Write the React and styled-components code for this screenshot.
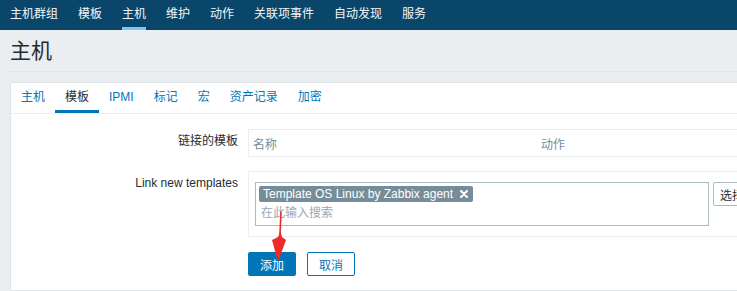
import React from 'react';
import styled, { createGlobalStyle } from 'styled-components';

const GlobalStyle = createGlobalStyle`
  html, body {
    margin: 0;
    padding: 0;
    background: #ebeef0;
    overflow: hidden;
  }
  body {
    font-family: "Liberation Sans", Arial, "Noto Sans CJK SC", sans-serif;
    font-size: 12px;
    color: #1f2c33;
  }
`;

const Page = styled.div`
  position: relative;
  width: 1000px;
`;

const TopNav = styled.nav`
  display: flex;
  gap: 20px;
  height: 30px;
  padding-left: 10px;
  background: #0a466a;
`;

const NavItem = styled.a`
  display: block;
  height: 27px;
  line-height: 28px;
  color: #f4f6f8;
  text-decoration: none;
  border-bottom: 3px solid ${(p) => (p.$active ? '#7fc6f2' : 'transparent')};
`;

const Header = styled.header`
  margin: 0 10px;
  padding: 9px 0 8px;
  border-bottom: 1px solid #dfe4e7;
`;

const Title = styled.h1`
  margin: 0;
  font-size: 21px;
  line-height: 24px;
  font-weight: normal;
  color: #1f2c33;
`;

const Card = styled.section`
  margin: 10px 0 0 10px;
  background: #fff;
  border: 1px solid #dfe4e7;
`;

const Tabs = styled.div`
  display: flex;
  height: 30px;
  border-bottom: 1px solid #ebeef0;
`;

const Tab = styled.a`
  display: block;
  padding: 0 10px;
  height: 27px;
  line-height: 28px;
  text-decoration: none;
  color: ${(p) => (p.$active ? '#1f2c33' : '#0275b8')};
  border-bottom: 3px solid ${(p) => (p.$active ? '#0275b8' : 'transparent')};
`;

const Form = styled.div`
  display: grid;
  grid-template-columns: 227px 1fr;
  column-gap: 10px;
  row-gap: 14px;
  padding: 15px 0 14px;
`;

const Label = styled.div`
  text-align: right;
  padding-top: 5px;
  line-height: 14px;
  color: #1f2c33;
`;

const Table = styled.div`
  display: grid;
  grid-template-columns: 288px 1fr;
  height: 26px;
  align-items: center;
  border: 1px solid #ebeef0;
`;

const HeadCell = styled.div`
  padding-left: 4px;
  color: #768d99;
`;

const Box = styled.div`
  display: flex;
  align-items: flex-start;
  gap: 4px;
  padding: 10px 6px;
  border: 1px solid #ebeef0;
`;

const MultiSelect = styled.div`
  box-sizing: content-box;
  width: 446px;
  height: 36px;
  padding: 3px;
  border: 1px solid #acbbc2;
  background: #fff;
`;

const Tags = styled.div`
  display: flex;
`;

const Tag = styled.span`
  display: inline-flex;
  align-items: center;
  gap: 7px;
  height: 16px;
  padding: 0 5px 0 4px;
  border-radius: 2px;
  background: #768d99;
  color: #fff;
  line-height: 16px;
`;

const Placeholder = styled.div`
  padding-left: 2px;
  height: 20px;
  line-height: 22px;
  color: #9aa8b0;
`;

const SelectButton = styled.button`
  height: 24px;
  padding: 0 6px;
  border: 1px solid #acbbc2;
  border-radius: 2px;
  background: #fff;
  color: #1f2c33;
  font: inherit;
`;

const Actions = styled.div`
  display: flex;
  gap: 11px;
  padding-top: 1px;
`;

const Button = styled.button`
  height: 24px;
  padding: 0 11px;
  border: 1px solid #0275b8;
  border-radius: 2px;
  font: inherit;
  background: ${(p) => (p.$primary ? '#0275b8' : '#fff')};
  color: ${(p) => (p.$primary ? '#fff' : '#0275b8')};
`;

const Arrow = styled.svg`
  position: absolute;
  left: 268px;
  top: 210px;
`;

const navItems = ['主机群组', '模板', '主机', '维护', '动作', '关联项事件', '自动发现', '服务'];
const tabs = ['主机', '模板', 'IPMI', '标记', '宏', '资产记录', '加密'];

export default function App() {
  return (
    <Page>
      <GlobalStyle />
      <TopNav>
        {navItems.map((item) => (
          <NavItem key={item} $active={item === '主机'}>
            {item}
          </NavItem>
        ))}
      </TopNav>
      <Header>
        <Title>主机</Title>
      </Header>
      <Card>
        <Tabs>
          {tabs.map((t) => (
            <Tab key={t} $active={t === '模板'}>
              {t}
            </Tab>
          ))}
        </Tabs>
        <Form>
          <Label>链接的模板</Label>
          <Table>
            <HeadCell>名称</HeadCell>
            <HeadCell>动作</HeadCell>
          </Table>

          <Label>Link new templates</Label>
          <Box>
            <MultiSelect>
              <Tags>
                <Tag>
                  Template OS Linux by Zabbix agent
                  <svg width="8" height="8" viewBox="0 0 8 8">
                    <path d="M1 1 L7 7 M7 1 L1 7" stroke="#fff" strokeWidth="2.2" strokeLinecap="round" />
                  </svg>
                </Tag>
              </Tags>
              <Placeholder>在此输入搜索</Placeholder>
            </MultiSelect>
            <SelectButton>选择</SelectButton>
          </Box>

          <div />
          <Actions>
            <Button $primary>添加</Button>
            <Button>取消</Button>
          </Actions>
        </Form>
      </Card>
      <Arrow width="24" height="60" viewBox="0 0 24 60">
        <path d="M13 2 L12 24" stroke="#ee2a2a" strokeWidth="1.6" strokeLinecap="round" />
        <polygon points="12.5,21 14,27 18,30 10,52 4,30 10,27" fill="#ee2a2a" />
      </Arrow>
    </Page>
  );
}
